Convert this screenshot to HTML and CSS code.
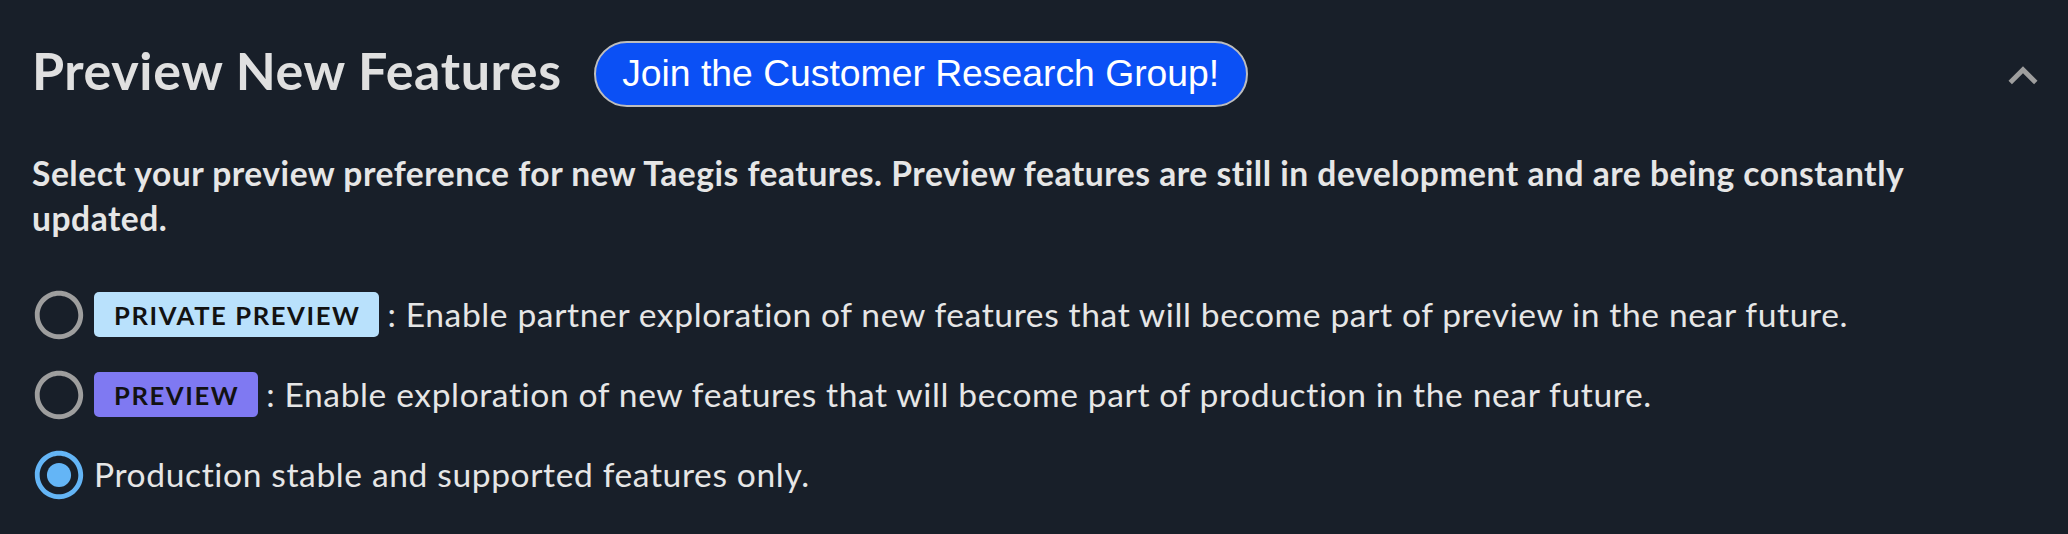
FILE: index.html
```html
<!DOCTYPE html>
<html lang="en">
<head>
<meta charset="utf-8">
<title>Preview New Features</title>
<link rel="stylesheet" href="styles.css">
</head>
<body>
<section class="panel">
  <div class="panel-head">
    <h2 class="panel-title">Preview New Features</h2>
    <button class="join-btn" type="button">Join the Customer Research Group!</button>
    <span class="spacer"></span>
    <svg class="chevron" viewBox="0 0 24 24" aria-hidden="true"><path d="M12 8l-6 6 1.41 1.41L12 10.83l4.59 4.58L18 14z"/></svg>
  </div>
  <p class="intro">Select your preview preference for new Taegis features. Preview features are still in development and are being constantly updated.</p>
  <div class="options">
    <label class="option">
      <svg class="radio" viewBox="0 0 24 24" aria-hidden="true"><path d="M12 2C6.48 2 2 6.48 2 12s4.48 10 10 10 10-4.48 10-10S17.52 2 12 2zm0 18c-4.42 0-8-3.58-8-8s3.58-8 8-8 8 3.58 8 8-3.58 8-8 8z"/></svg>
      <span class="badge badge-private">PRIVATE PREVIEW</span>
      <span class="label-text">: Enable partner exploration of new features that will become part of preview in the near future.</span>
    </label>
    <label class="option">
      <svg class="radio" viewBox="0 0 24 24" aria-hidden="true"><path d="M12 2C6.48 2 2 6.48 2 12s4.48 10 10 10 10-4.48 10-10S17.52 2 12 2zm0 18c-4.42 0-8-3.58-8-8s3.58-8 8-8 8 3.58 8 8-3.58 8-8 8z"/></svg>
      <span class="badge badge-preview">PREVIEW</span>
      <span class="label-text">: Enable exploration of new features that will become part of production in the near future.</span>
    </label>
    <label class="option">
      <svg class="radio radio-checked" viewBox="0 0 24 24" aria-hidden="true"><path d="M12 2C6.48 2 2 6.48 2 12s4.48 10 10 10 10-4.48 10-10S17.52 2 12 2zm0 18c-4.42 0-8-3.58-8-8s3.58-8 8-8 8 3.58 8 8-3.58 8-8 8z"/><path d="M12 7c-2.76 0-5 2.24-5 5s2.24 5 5 5 5-2.24 5-5-2.24-5-5-5z"/></svg>
      <span class="label-text">Production stable and supported features only.</span>
    </label>
  </div>
</section>
</body>
</html>
```

FILE: styles.css
```css
html, body {
  margin: 0;
  padding: 0;
  background: #181f29;
}

body {
  width: 2068px;
  height: 534px;
  overflow: hidden;
  font-family: Lato, "Noto Sans", sans-serif;
  color: #e6e6e6;
}

.panel {
  padding: 41px 16px 0 32px;
}

.panel-head {
  display: flex;
  align-items: center;
  height: 66px;
}

.panel-title {
  margin: 0 32px 8px 0;
  font-size: 52px;
  line-height: 52px;
  font-weight: 700;
  letter-spacing: 0.6px;
  color: #e0e0e0;
}

.join-btn {
  height: 66px;
  padding: 0 26.5px;
  border: 2px solid #bdbdbd;
  border-radius: 33px;
  background: #0b50f5;
  color: #ffffff;
  font-family: "Liberation Sans", Arial, sans-serif;
  font-size: 37.3px;
  line-height: 1;
}

.spacer {
  flex: 1;
}

.chevron {
  width: 58px;
  height: 58px;
  fill: #9e9e9e;
  margin-top: 3px;
}

.intro {
  margin: 44px 19px 0 0;
  font-size: 33.6px;
  line-height: 44.8px;
  font-weight: 700;
  letter-spacing: 0.52px;
  color: #e6e6e6;
}

.options {
  display: flex;
  flex-direction: column;
  margin-top: 34px;
}

.option {
  display: flex;
  align-items: center;
  height: 80px;
}

.radio {
  width: 58px;
  height: 58px;
  margin-left: -2px;
  margin-right: 6px;
  fill: #9e9e9e;
  flex: none;
}

.radio-checked {
  fill: #64b5f6;
}

.badge {
  display: flex;
  align-items: center;
  height: 45px;
  box-sizing: border-box;
  padding: 0 19px 0 20px;
  margin-right: 8px;
  border-radius: 5px;
  font-size: 25.6px;
  font-weight: 700;
  letter-spacing: 1.6px;
  color: #121212;
}

.badge-private {
  background: #b9e1fc;
}

.badge-preview {
  background: #7f79f2;
}

.label-text {
  font-size: 33.6px;
  line-height: 44.8px;
  letter-spacing: 0.62px;
  color: #e6e6e6;
}
```
